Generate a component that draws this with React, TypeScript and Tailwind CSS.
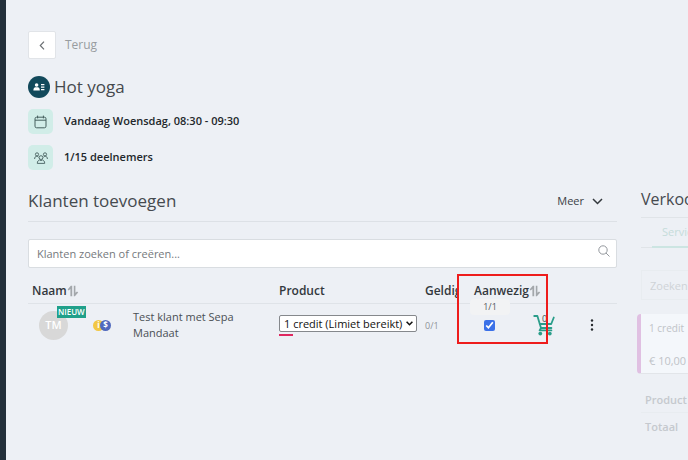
import type { ReactNode } from "react";

interface InfoRowProps {
  icon: ReactNode;
  children: ReactNode;
}

const SortIcon = () => (
  <svg width="12" height="12" viewBox="0 0 12 12" fill="#a3a7ab" className="shrink-0">
    <path d="M.6 4.400 3.800.8h1.400v10.400H3.400V3.900L1.700 5.600z" />
    <path d="M6.800.8h1.600v7L10 6.600l1.200 1-3.300 3.600H6.800z" />
  </svg>
);

const ContactIcon = () => (
  <svg width="12" height="8" viewBox="0 0 12 8" fill="#fff">
    <circle cx="3.6" cy="2" r="1.8" />
    <path d="M0.4 7.4c0-2 .9-3.2 2-3.2h2.4c1.1 0 2 1.2 2 3.2z" />
    <path d="M8 1h3.4v1.2H8zM8 3.5h3.4v1.2H8zM8 6h3.4v1.2H8z" />
  </svg>
);

const CalendarIcon = () => (
  <svg width="13" height="14" viewBox="0 0 13 14" fill="none" stroke="#46605f" strokeWidth="1">
    <rect x="1" y="2.2" width="11" height="10.6" rx="1.6" />
    <path d="M1 5.2h11M3.6 .6v2.8M9.4 .6v2.8" />
  </svg>
);

const GroupIcon = () => (
  <svg width="14" height="12" viewBox="0 0 14 12" fill="none" stroke="#46605f" strokeWidth="0.9">
    <circle cx="3" cy="2.4" r="1.6" />
    <circle cx="11" cy="2.4" r="1.6" />
    <circle cx="7" cy="5.6" r="1.9" />
    <path d="M.6 7c0-1.700.9-2.800 2.200-2.800.8 0 1.400.4 1.700.9M13.400 7c0-1.700-.9-2.800-2.200-2.800-.8 0-1.400.4-1.700.9" />
    <path d="M3.300 11.400c0-2 1-3.200 2.400-3.500L7 8.700l1.300-.8c1.400.3 2.400 1.500 2.400 3.500z" />
  </svg>
);

const CartIcon = () => (
  <svg width="22" height="22" viewBox="0 0 22 22" fill="none" stroke="#2a9d8a" strokeWidth="1.800" strokeLinecap="round" strokeLinejoin="round">
    <path d="M1.200 2h3.200l3.600 12h10.400" />
    <path d="M6.800 10h11.400l2.600-6.500M8 14l-1.400 2.400h11.800" />
    <circle cx="7.300" cy="19.600" r="1.900" fill="#2a9d8a" stroke="none" />
    <circle cx="16.800" cy="19.600" r="1.900" fill="#2a9d8a" stroke="none" />
  </svg>
);

const InfoRow = ({ icon, children }: InfoRowProps) => (
  <div className="flex items-center gap-[11px]">
    <span className="flex size-[25px] items-center justify-center rounded-[5px] bg-[#d1ede8]">{icon}</span>
    <span className="text-[11px] font-semibold text-[#22272b]">{children}</span>
  </div>
);

function Customers() {
  return (
    <table className="mt-[11px] w-full table-fixed text-left">
      <colgroup>
        <col className="w-[59px]" />
        <col className="w-[42px]" />
        <col />
        <col className="w-[146px]" />
        <col className="w-[39px]" />
        <col className="w-[61px]" />
        <col className="w-[49px]" />
        <col className="w-[43px]" />
      </colgroup>
      <thead>
        <tr className="h-6 border-b border-[#dfe3e8] text-xs font-semibold text-[#33383d]">
          <th colSpan={3} className="pl-1 font-semibold">
            <span className="flex items-center">Naam<SortIcon /></span>
          </th>
          <th className="font-semibold">Product</th>
          <th className="overflow-hidden font-semibold">
            <span className="block w-[34px] overflow-hidden whitespace-nowrap">Geldig</span>
          </th>
          <th colSpan={2} className="relative pl-2.5 font-semibold">
            <span className="flex items-center">Aanwezig<SortIcon /></span>
            <span className="pointer-events-none absolute -top-[5px] -left-[7px] z-10 h-[70px] w-[91px] border-2 border-[#ee1c1c]" />
          </th>
          <th />
        </tr>
      </thead>
      <tbody>
        <tr className="h-11 align-middle">
          <td className="pl-[11px]">
            <div className="relative flex size-[29px] items-center justify-center rounded-full bg-[#d8d8d8] text-[11px] font-semibold text-white">
              TM
              <span className="absolute -top-[5px] left-[18px] bg-[#20a08a] px-px text-[8px] leading-3 font-semibold">NIEUW</span>
            </div>
          </td>
          <td>
            <div className="flex pl-1.5">
              <span className="flex size-[11px] items-center justify-center rounded-full bg-[#f2c744] text-[8px] leading-none font-bold text-white">i</span>
              <span className="-ml-1 flex size-[11px] items-center justify-center rounded-full bg-[#5069bd] text-[8px] leading-none font-bold text-white">$</span>
            </div>
          </td>
          <td className="pr-8 pl-1 text-[11px] leading-4 text-[#4a4f54]">Test klant met Sepa Mandaat</td>
          <td>
            <div className="relative w-[138px]">
              <select
                aria-label="Product"
                className="block h-[17px] w-full appearance-none rounded-[2px] border border-[#85888c] bg-white pl-1 text-[11px] leading-[15px] text-[#111]"
              >
                <option>1 credit (Limiet bereikt)</option>
              </select>
              <svg width="7" height="5" viewBox="0 0 7 5" fill="none" stroke="#111" strokeWidth="1.600" className="pointer-events-none absolute top-1.5 right-1">
                <path d="m.6.8 2.900 2.900L6.400.8" />
              </svg>
            </div>
            <div className="mt-0.5 -mb-px h-0.5 w-3.5 bg-[#df2860]" />
          </td>
          <td className="text-[9px] text-[#8e9297]">0/1</td>
          <td className="relative">
            <span className="absolute -top-[5px] left-1.5 w-10 rounded bg-[#f2f3f4] text-center text-[9px] leading-4 text-[#55595d]">1/1</span>
            <input type="checkbox" aria-label="Aanwezig" defaultChecked className="ml-5 block size-[11px] accent-[#3b71e8]" />
          </td>
          <td>
            <button aria-label="Winkelwagen" className="relative ml-2 block">
              <CartIcon />
              <span className="absolute -top-px left-[9px] text-[9px] leading-3 text-[#3c5553]">0</span>
            </button>
          </td>
          <td>
            <button aria-label="Opties" className="ml-4 block">
              <svg width="4" height="12" viewBox="0 0 4 12" fill="#25292d">
                <circle cx="2" cy="1.500" r="1.200" />
                <circle cx="2" cy="6" r="1.200" />
                <circle cx="2" cy="10.500" r="1.200" />
              </svg>
            </button>
          </td>
        </tr>
      </tbody>
    </table>
  );
}

function Sales() {
  return (
    <aside className="w-[47px] shrink-0 pt-[187px] whitespace-nowrap">
      <div className="w-60">
        <h2 className="text-base leading-6 text-[#454a4f]">Verkoop</h2>
        <div className="mt-1.5 border-t border-b border-[#e0e4e8] pl-[11px]">
          <button className="-mb-px h-[30px] border-b-2 border-[#cce5e2] px-2.5 text-[11px] text-[#c5dcda]">Services</button>
        </div>
        <input
          aria-label="Zoeken"
          placeholder="Zoeken"
          className="mt-[22px] block h-[30px] w-full border border-[#e8ecf0] px-2 text-[11px] placeholder:text-[#cfd3d7]"
        />
        <div className="mt-3.5 -ml-1 flex h-[60px] flex-col justify-between rounded border-b border-l-4 border-b-[#e2e5e9] border-l-[#e0c0e2] bg-[#f4f7fb] px-2 pt-1.5 pb-1 text-[#bfc3c8]">
          <span className="text-[10px] leading-4">1 credit</span>
          <span className="text-[11px] leading-4">€ 10,00</span>
        </div>
        <div className="mt-4 border-b border-[#e8ecf0] pb-0.5 pl-1 text-[11px] leading-5 font-semibold text-[#c5c9ce]">Product</div>
        <div className="mt-1 pl-1 text-[11px] leading-5 font-semibold text-[#c5c9ce]">Totaal</div>
      </div>
    </aside>
  );
}

export default function App() {
  return (
    <div className="flex min-h-screen overflow-hidden bg-[#edf0f5] font-['Open_Sans','Noto_Sans',sans-serif]">
      <nav className="w-1.5 shrink-0 bg-[#232f3a]" />
      <main className="min-w-0 flex-1 pt-[31px] pr-6 pl-[22px]">
        <a href="#terug" className="flex items-center gap-[9px] text-xs text-[#989ca0]">
          <span className="flex size-7 items-center justify-center rounded-[2px] border border-[#e1e4e8] bg-white">
            <svg width="6" height="9" viewBox="0 0 6 9" fill="none" stroke="#6b6f73" strokeWidth="1.200">
              <path d="M5 .7 1.300 4.500 5 8.300" />
            </svg>
          </span>
          Terug
        </a>
        <div className="mt-4 flex items-center gap-1">
          <span className="flex size-[22px] items-center justify-center rounded-full bg-[#12495b]"><ContactIcon /></span>
          <h1 className="text-[17px] leading-6 text-[#45494d]">Hot yoga</h1>
        </div>
        <div className="mt-2.5 flex flex-col gap-[11px]">
          <InfoRow icon={<CalendarIcon />}>Vandaag Woensdag, 08:30 - 09:30</InfoRow>
          <InfoRow icon={<GroupIcon />}>1/15 deelnemers</InfoRow>
        </div>
        <div className="mt-[19px] flex items-center justify-between border-b border-[#dde1e6] pb-2">
          <h2 className="text-[17px] leading-6 text-[#454a4f]">Klanten toevoegen</h2>
          <button className="flex items-center gap-2 pr-3.5 text-[11px] text-[#3c4146]">
            Meer
            <svg width="11" height="7" viewBox="0 0 11 7" fill="none" stroke="#33383d" strokeWidth="1.500">
              <path d="m1 1 4.500 4.500L10 1" />
            </svg>
          </button>
        </div>
        <div className="relative mt-[17px]">
          <input
            aria-label="Klanten zoeken of creëren"
            placeholder="Klanten zoeken of creëren..."
            className="block h-[29px] w-full rounded-[2px] border border-[#d9dde1] bg-white px-2 text-[11px] placeholder:text-[#75797d]"
          />
          <svg width="12" height="12" viewBox="0 0 12 12" fill="none" stroke="#94989d" strokeWidth="1" className="absolute top-[6px] right-[7px]">
            <circle cx="5" cy="5" r="4.200" />
            <path d="m8 8 3.500 3.500" />
          </svg>
        </div>
        <Customers />
      </main>
      <Sales />
    </div>
  );
}
